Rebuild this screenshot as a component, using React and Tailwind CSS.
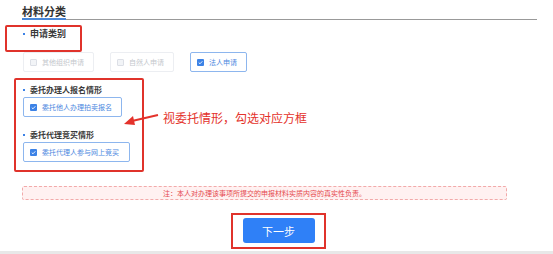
const Check = ({ on }) =>
  on ? (
    <span className="w-[7px] h-[7px] rounded-[1px] bg-[#3c82e6] flex items-center justify-center">
      <svg width="5" height="5" viewBox="0 0 10 10">
        <path d="M1.5 5.2 L4 7.6 L8.6 2.6" stroke="#fff" strokeWidth="1.8" fill="none" />
      </svg>
    </span>
  ) : (
    <span className="w-[7px] h-[7px] rounded-[1px] border border-[#dcdfe6] bg-[#f2f4f7]" />
  );

const Option = ({ label, on, w }) => (
  <div
    className={`${w} h-[20px] flex items-center gap-[5px] pl-[6px] rounded-[2px] border ${
      on ? "border-[#8db6ee] text-[#4d88e0]" : "border-[#eceef2] text-[#c4c7cc]"
    }`}
  >
    <Check on={on} />
    <span className="text-[7px] leading-[10px]">{label}</span>
  </div>
);

const Label = ({ children }) => (
  <div className="flex items-center gap-[5px] text-[8px] leading-[12px] font-bold text-[#3a3a3a]">
    <span className="w-[2px] h-[2px] bg-[#3c82e6]" />
    {children}
  </div>
);

export default function App() {
  return (
    <div className="w-[553px] h-[254px] bg-white relative overflow-hidden font-['Noto_Sans_CJK_SC','Noto_Sans',sans-serif]">
      {/* header */}
      <div className="mt-[4px] ml-[22px] w-[515px] flex border-b border-[#999]">
        <span className="text-[11px] leading-[14px] font-bold text-[#333] border-b-2 border-[#4a87d8] -mb-px">
          材料分类
        </span>
      </div>

      {/* 申请类别 */}
      <div className="mt-[5px] ml-[5px] w-[77px] h-[27px] border-2 border-[#e0332b] rounded-[2px] pl-[16px] pt-[1px]">
        <Label>
          <span className="text-[9px]">申请类别</span>
        </Label>
      </div>
      <div className="ml-[23px] flex gap-[16px]">
        <Option label="其他组织申请" w="w-[71px]" />
        <Option label="自然人申请" w="w-[64px]" />
        <Option label="法人申请" w="w-[57px]" on />
      </div>

      {/* 委托情形 */}
      <div className="mt-[6px] ml-[14px] w-[130px] h-[94px] border-2 border-[#e0332b] rounded-[2px] pl-[7px] pt-[4px]">
        <Label>委托办理人报名情形</Label>
        <div className="mt-[1px]">
          <Option label="委托他人办理拍卖报名" w="w-[99px]" on />
        </div>
        <div className="mt-[12px]">
          <Label>委托代理竞买情形</Label>
        </div>
        <div className="mt-[1px]">
          <Option label="委托代理人参与网上竞买" w="w-[107px]" on />
        </div>
      </div>

      {/* annotation */}
      <svg className="absolute left-[120px] top-[109px]" width="42" height="20" viewBox="0 0 42 20">
        <path d="M38 6 L12 12" stroke="#e4322b" strokeWidth="2" fill="none" />
        <path d="M4 15 L13 7 L15 16 Z" fill="#e4322b" />
      </svg>
      <div className="absolute left-[163px] top-[109px] text-[12px] leading-[18px] text-[#e4322b] whitespace-nowrap">
        视委托情形，勾选对应方框
      </div>

      {/* note */}
      <div className="mt-[14px] ml-[22px] w-[485px] h-[14px] border border-dashed border-[#f2aaaa] bg-[#fff1f1] rounded-[2px] flex items-center justify-center">
        <span className="text-[7px] leading-[10px] text-[#e5484d]">
          注：本人对办理该事项所提交的申报材料实质内容的真实性负责。
        </span>
      </div>

      {/* next */}
      <div className="mt-[13px] ml-[231px] w-[95px] h-[36px] border-2 border-[#e0332b] flex justify-center pt-[3px]">
        <button className="w-[72px] h-[25px] rounded-[3px] bg-[#2f80f7] text-white text-[11px] leading-[14px]">
          下一步
        </button>
      </div>

      <div className="mt-[2px] h-[3px] bg-[#e8e8e8]" />
    </div>
  );
}
